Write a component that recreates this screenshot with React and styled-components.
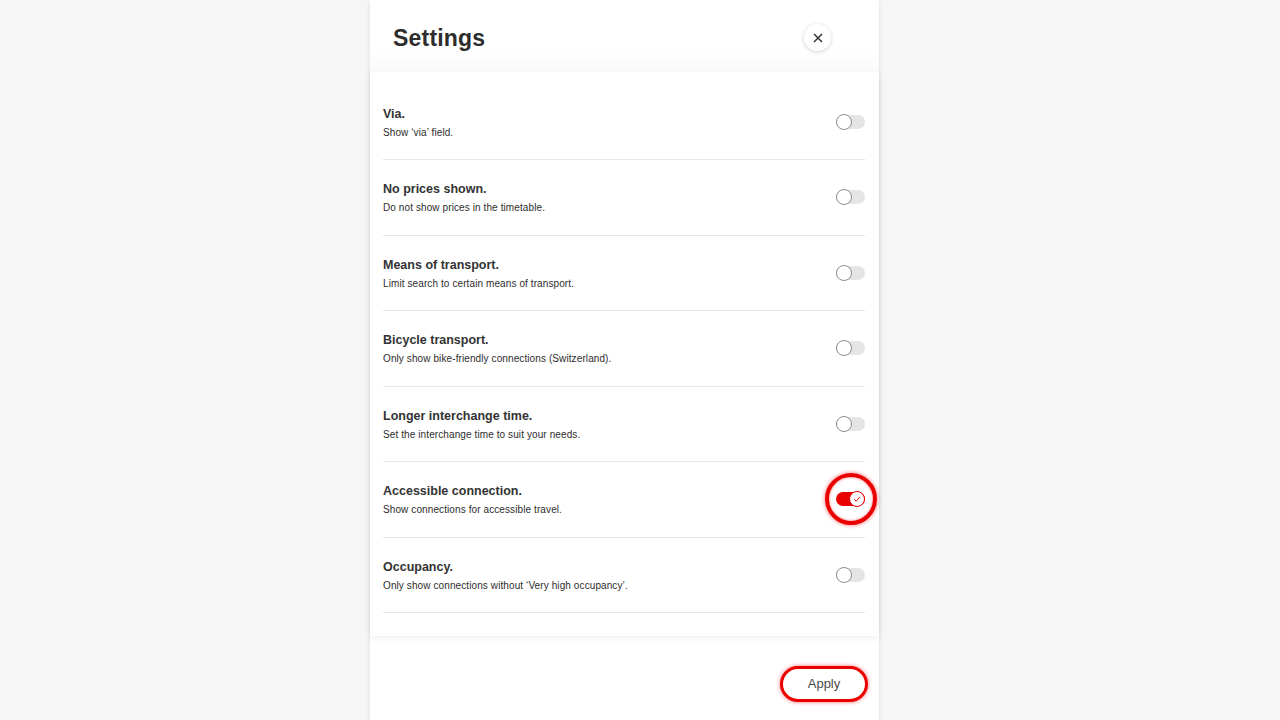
import React from 'react';
import styled, { createGlobalStyle } from 'styled-components';

const GlobalStyle = createGlobalStyle`
  html, body {
    margin: 0;
    padding: 0;
    background: #f6f6f6;
    font-family: "Liberation Sans", Arial, sans-serif;
    color: #2d2d2d;
  }
`;

const settings = [
  { title: 'Via.', text: 'Show ‘via’ field.', on: false },
  { title: 'No prices shown.', text: 'Do not show prices in the timetable.', on: false },
  { title: 'Means of transport.', text: 'Limit search to certain means of transport.', on: false },
  { title: 'Bicycle transport.', text: 'Only show bike-friendly connections (Switzerland).', on: false },
  { title: 'Longer interchange time.', text: 'Set the interchange time to suit your needs.', on: false },
  { title: 'Accessible connection.', text: 'Show connections for accessible travel.', on: true },
  { title: 'Occupancy.', text: 'Only show connections without ‘Very high occupancy’.', on: false },
];

const Page = styled.div`
  height: 720px;
  overflow: hidden;
  padding-left: 370px;
`;

const Modal = styled.div`
  width: 509px;
  height: 730px;
  background: #fff;
  border-radius: 6px 6px 0 0;
  box-shadow: 0 0 4px rgba(0, 0, 0, 0.12);
  display: flex;
  flex-direction: column;
`;

const Header = styled.div`
  height: 72px;
  box-sizing: border-box;
  padding: 4px 48px 0 23px;
  display: flex;
  align-items: center;
  justify-content: space-between;
  position: relative;
  z-index: 1;
  background: linear-gradient(#fff 70%, #f9f9f9);
`;

const Title = styled.h1`
  margin: 0;
  font-size: 23px;
  font-weight: 700;
  color: #2d2d2d;
  letter-spacing: 0.2px;
`;

const CloseButton = styled.button`
  width: 27px;
  height: 27px;
  border-radius: 50%;
  border: none;
  background: #fff;
  box-shadow: 0 1px 4px rgba(0, 0, 0, 0.18);
  display: flex;
  align-items: center;
  justify-content: center;
  padding: 0;
  margin-top: -1px;
`;

const Content = styled.div`
  height: 564px;
  padding: 12.5px 14px 0 13px;
  box-sizing: border-box;
  background: #fff;
  box-shadow: 0 2px 8px rgba(0, 0, 0, 0.06), 0 -2px 6px rgba(0, 0, 0, 0.04);
  position: relative;
`;

const Row = styled.div`
  height: 74.5px;
  border-bottom: 1px solid #e6e6e6;
  display: flex;
  align-items: center;
  justify-content: space-between;
`;

const Texts = styled.div`
  display: flex;
  flex-direction: column;
  gap: 6px;
  margin-top: 1px;
`;

const RowTitle = styled.div`
  font-size: 12.5px;
  font-weight: 700;
  color: #333;
`;

const RowText = styled.div`
  font-size: 10px;
  color: #2d2d2d;
  letter-spacing: 0.1px;
`;

const ToggleWrap = styled.div`
  width: 29px;
  height: 16px;
  position: relative;
  ${(p) =>
    p.$focus &&
    `
    &::before {
      content: '';
      position: absolute;
      left: 50%;
      top: 50%;
      width: 44px;
      height: 44px;
      margin: -26px 0 0 -26px;
      border: 4px solid #eb0000;
      border-radius: 50%;
      box-shadow: 0 0 4px rgba(235, 0, 0, 0.6), inset 0 0 3px rgba(235, 0, 0, 0.5);
    }
  `}
`;

const Track = styled.div`
  width: 29px;
  height: 14px;
  margin-top: 1px;
  border-radius: 7px;
  background: ${(p) => (p.$on ? '#eb0000' : '#e5e5e5')};
`;

const Knob = styled.div`
  position: absolute;
  top: 0;
  left: ${(p) => (p.$on ? '13px' : '0')};
  width: 14px;
  height: 14px;
  border-radius: 50%;
  background: #fff;
  border: 1px solid ${(p) => (p.$on ? '#eb0000' : '#8d8d8d')};
  display: flex;
  align-items: center;
  justify-content: center;
`;

const Footer = styled.div`
  flex: 1;
  display: flex;
  justify-content: flex-end;
  padding: 30px 11px 0 0;
`;

const ApplyButton = styled.button`
  width: 88px;
  height: 36px;
  border-radius: 18px;
  border: 3px solid #eb0000;
  background: #fff;
  box-shadow: 0 0 4px rgba(235, 0, 0, 0.55);
  font-family: "Liberation Sans", Arial, sans-serif;
  font-size: 13px;
  color: #4a4a4a;
  padding: 0 0 1px;
`;

const Toggle = ({ on }) => (
  <ToggleWrap $focus={on}>
    <Track $on={on} />
    <Knob $on={on}>
      {on && (
        <svg width="10" height="10" viewBox="0 0 10 10">
          <path d="M2.2 5.2 L4.2 7.2 L7.9 2.8" fill="none" stroke="#eb0000" strokeWidth="1" />
        </svg>
      )}
    </Knob>
  </ToggleWrap>
);

export default function App() {
  return (
    <>
      <GlobalStyle />
      <Page>
        <Modal>
          <Header>
            <Title>Settings</Title>
            <CloseButton aria-label="Close">
              <svg width="10" height="10" viewBox="0 0 10 10">
                <path d="M1 1 L9 9 M9 1 L1 9" stroke="#333" strokeWidth="1.5" />
              </svg>
            </CloseButton>
          </Header>
          <Content>
            {settings.map((s) => (
              <Row key={s.title}>
                <Texts>
                  <RowTitle>{s.title}</RowTitle>
                  <RowText>{s.text}</RowText>
                </Texts>
                <Toggle on={s.on} />
              </Row>
            ))}
          </Content>
          <Footer>
            <ApplyButton>Apply</ApplyButton>
          </Footer>
        </Modal>
      </Page>
    </>
  );
}
